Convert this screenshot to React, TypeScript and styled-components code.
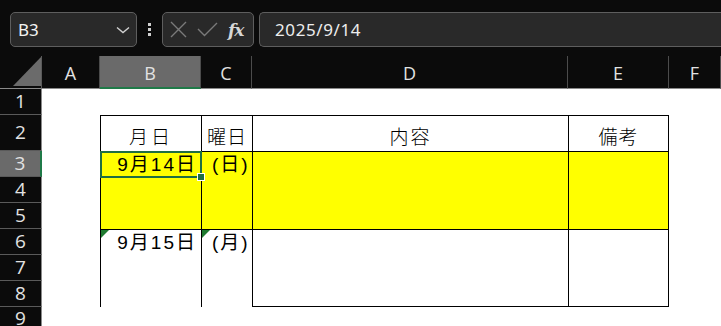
import React from "react";
import styled, { createGlobalStyle } from "styled-components";

const Global = createGlobalStyle`
  html, body { margin: 0; padding: 0; background: #0b0b0b; }
  body { width: 721px; height: 326px; overflow: hidden; }
`;

const Root = styled.div`
  width: 721px;
  height: 326px;
  overflow: hidden;
  background: #0b0b0b;
  font-family: "Noto Sans", "Liberation Sans", sans-serif;
`;

const FormulaBar = styled.div`
  height: 56px;
  box-sizing: border-box;
  padding: 12px 0 9px 10px;
  display: flex;
  align-items: stretch;
  gap: 0;
`;

const Box = styled.div<{ $w?: number }>`
  box-sizing: border-box;
  height: 35px;
  ${(p) => (p.$w ? `width: ${p.$w}px; flex: none;` : "flex: 1;")}
  background: #292929;
  border: 1px solid #5e5e5e;
  border-radius: 5px;
  display: flex;
  align-items: center;
`;

const InputBox = styled(Box)`
  margin-left: 5px;
  border-right: none;
  border-top-right-radius: 0;
  border-bottom-right-radius: 0;
`;

const NameText = styled.span`
  flex: 1;
  padding-left: 7px;
  color: #f2f2f2;
  font-size: 17px;
  font-family: "Noto Sans", sans-serif;
`;

const Chevron = styled.svg`
  margin-right: 6px;
`;

const Dots = styled.div`
  width: 25px;
  flex: none;
  display: flex;
  flex-direction: column;
  align-items: center;
  justify-content: center;
  gap: 2px;
  span {
    width: 3px;
    height: 3px;
    background: #cfcfcf;
  }
`;

const FxIcons = styled.div`
  display: flex;
  align-items: center;
  padding-left: 7px;
  gap: 10px;
`;

const FxLabel = styled.span`
  font-family: "DejaVu Serif", "Liberation Serif", serif;
  font-style: italic;
  font-weight: bold;
  color: #d6d6d6;
  font-size: 17px;
  letter-spacing: -1px;
`;

const FormulaText = styled.span`
  padding-left: 15px;
  color: #ededed;
  font-size: 17px;
  letter-spacing: 0.6px;
`;

const Sheet = styled.div`
  display: grid;
  grid-template-columns: 42px 58px 101px 51px 316px 101px 1fr;
  grid-template-rows: 33px 26px 36px repeat(7, 26px);
  background: #ffffff;
  height: 270px;
  overflow: hidden;
`;

const Corner = styled.div`
  grid-column: 1;
  grid-row: 1;
  background: #0b0b0b;
  border-right: 1px solid #5a5a5a;
  border-bottom: 1px solid #8a8a8a;
  position: relative;
  box-sizing: border-box;
  svg { position: absolute; left: 13px; top: 1px; }
`;

const ColHead = styled.div<{ $col: number; $sel?: boolean }>`
  grid-column: ${(p) => p.$col};
  grid-row: 1;
  box-sizing: border-box;
  background: ${(p) => (p.$sel ? "#6a6a6a" : "#0b0b0b")};
  border-right: 1px solid #4c4c4c;
  border-bottom: ${(p) => (p.$sel ? "2px solid #1f7a48" : "1px solid #8a8a8a")};
  display: flex;
  align-items: center;
  justify-content: center;
  color: #e2e2e2;
  font-family: "Open Sans", sans-serif;
  font-size: 18px;
  padding-top: ${(p) => (p.$sel ? "3px" : "2px")};
`;

const RowHead = styled.div<{ $row: number; $sel?: boolean; $top?: boolean }>`
  grid-column: 1;
  grid-row: ${(p) => p.$row};
  box-sizing: border-box;
  background: ${(p) => (p.$sel ? "#6a6a6a" : "#0b0b0b")};
  border-right: ${(p) => (p.$sel ? "2px solid #1f7a48" : "1px solid #8a8a8a")};
  border-bottom: 1px solid #5a5a5a;
  display: flex;
  align-items: ${(p) => (p.$top ? "flex-start" : "center")};
  padding-top: ${(p) => (p.$top ? "2px" : "0")};
  justify-content: center;
  color: #e2e2e2;
  font-family: "Open Sans", sans-serif;
  font-size: 19px;
  line-height: 1;
`;

const Cell = styled.div<{
  $col: number;
  $row: number;
  $rowSpan?: number;
  $fill?: boolean;
  $right?: boolean;
  $bottom?: boolean;
}>`
  grid-column: ${(p) => p.$col};
  grid-row: ${(p) => p.$row} / span ${(p) => p.$rowSpan ?? 1};
  box-sizing: border-box;
  position: relative;
  background: ${(p) => (p.$fill ? "#ffff00" : "#ffffff")};
  border-left: 1px solid #000;
  border-top: 1px solid #000;
  ${(p) => (p.$right ? "border-right: 1px solid #000;" : "")}
  ${(p) => (p.$bottom ? "border-bottom: 1px solid #000;" : "")}
  color: #000;
  font-family: "Liberation Sans", "Noto Sans CJK JP", sans-serif;
  font-size: 19px;
`;

const HeadText = styled.div<{ $ls?: number }>`
  height: 100%;
  display: flex;
  align-items: center;
  justify-content: center;
  padding-top: 3px;
  box-sizing: border-box;
  letter-spacing: ${(p) => p.$ls ?? 0}px;
  font-family: "Noto Sans CJK JP", sans-serif;
  font-weight: 300;
`;

const LineText = styled.div<{ $align: "right" | "left"; $ls?: number }>`
  height: 25px;
  line-height: 25px;
  text-align: ${(p) => p.$align};
  padding-right: ${(p) => (p.$align === "right" ? "4px" : "0")};
  padding-left: ${(p) => (p.$align === "left" ? "10px" : "0")};
  letter-spacing: ${(p) => p.$ls ?? 0}px;
  white-space: nowrap;
`;

const Selection = styled.div`
  grid-column: 3;
  grid-row: 4;
  margin: 0 -1px -1px 0;
  border: 2px solid #1f6e43;
  box-sizing: border-box;
  position: relative;
  pointer-events: none;
`;

const Handle = styled.div`
  position: absolute;
  right: -5px;
  bottom: -5px;
  width: 6px;
  height: 6px;
  background: #1f6e43;
  border: 1px solid #ffffff;
`;

const ErrorMark = styled.div`
  position: absolute;
  left: 0;
  top: 0;
  width: 0;
  height: 0;
  border-top: 8px solid #1f7a30;
  border-right: 8px solid transparent;
`;

export default function App() {
  const cols = ["A", "B", "C", "D", "E", "F"];
  const rows = [1, 2, 3, 4, 5, 6, 7, 8, 9];
  return (
    <Root>
      <Global />
      <FormulaBar>
        <Box $w={127}>
          <NameText>B3</NameText>
          <Chevron width="14" height="8" viewBox="0 0 14 8">
            <path d="M1 1.5 L7 6.5 L13 1.5" fill="none" stroke="#d0d0d0" strokeWidth="1.4" />
          </Chevron>
        </Box>
        <Dots>
          <span />
          <span />
          <span />
        </Dots>
        <Box $w={92}>
          <FxIcons>
            <svg width="17" height="17" viewBox="0 0 17 17">
              <path d="M1 1 L16 16 M16 1 L1 16" stroke="#7a7a7a" strokeWidth="1.4" />
            </svg>
            <svg width="21" height="15" viewBox="0 0 21 15">
              <path d="M1 7 L7.5 13.5 L20 1" fill="none" stroke="#7a7a7a" strokeWidth="1.4" />
            </svg>
            <FxLabel>fx</FxLabel>
          </FxIcons>
        </Box>
        <InputBox>
          <FormulaText>2025/9/14</FormulaText>
        </InputBox>
      </FormulaBar>
      <Sheet>
        <Corner>
          <svg width="28" height="29" viewBox="0 0 28 29">
            <polygon points="28,0 28,29 0,29" fill="#6b6b6b" />
          </svg>
        </Corner>
        {cols.map((c, i) => (
          <ColHead key={c} $col={i + 2} $sel={c === "B"}>
            {c}
          </ColHead>
        ))}
        {rows.map((r) => (
          <RowHead key={r} $row={r + 1} $sel={r === 3} $top={r === 9}>
            {r}
          </RowHead>
        ))}

        <Cell $col={3} $row={3}>
          <HeadText $ls={3}>月日</HeadText>
        </Cell>
        <Cell $col={4} $row={3}>
          <HeadText $ls={1}>曜日</HeadText>
        </Cell>
        <Cell $col={5} $row={3}>
          <HeadText $ls={2}>内容</HeadText>
        </Cell>
        <Cell $col={6} $row={3} $right>
          <HeadText $ls={1}>備考</HeadText>
        </Cell>

        <Cell $col={3} $row={4} $rowSpan={3} $fill>
          <LineText $align="right" $ls={2}>9月14日</LineText>
        </Cell>
        <Cell $col={4} $row={4} $rowSpan={3} $fill>
          <LineText $align="left" $ls={2}>(日)</LineText>
        </Cell>
        <Cell $col={5} $row={4} $rowSpan={3} $fill />
        <Cell $col={6} $row={4} $rowSpan={3} $fill $right />

        <Cell $col={3} $row={7} $rowSpan={3}>
          <ErrorMark />
          <LineText $align="right" $ls={2}>9月15日</LineText>
        </Cell>
        <Cell $col={4} $row={7} $rowSpan={3}>
          <ErrorMark />
          <LineText $align="left" $ls={2}>(月)</LineText>
        </Cell>
        <Cell $col={5} $row={7} $rowSpan={3} $bottom />
        <Cell $col={6} $row={7} $rowSpan={3} $right $bottom />

        <Selection>
          <Handle />
        </Selection>
      </Sheet>
    </Root>
  );
}
